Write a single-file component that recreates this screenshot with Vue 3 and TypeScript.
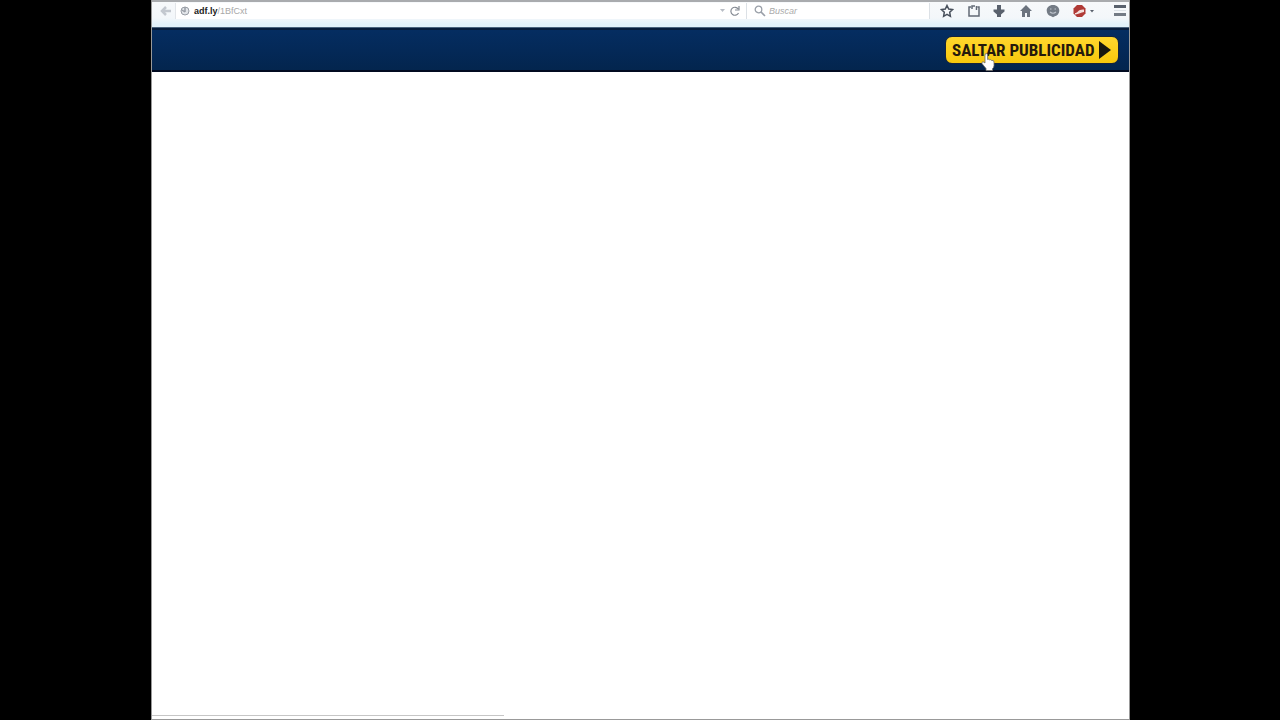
<script setup lang="ts">
import { ref } from 'vue'

const query = ref('')
</script>

<template>
  <div class="stage">
    <div class="browser">
      <header class="toolbar">
        <button class="icon back" aria-label="Atrás">
          <svg width="12" height="10" viewBox="0 0 12 10"><path d="M6 1 2 5l4 4M2 5h9" fill="none" stroke="#c3c8cf" stroke-width="2.500" /></svg>
        </button>
        <div class="address">
          <svg width="10" height="10" viewBox="0 0 10 10">
            <circle cx="5" cy="5" r="4" fill="#e2e5e9" stroke="#989da5" />
            <path d="M5 1v5M2 4l3 2" fill="none" stroke="#989da5" stroke-width="1.500" />
          </svg>
          <a class="url" href="#"><b>adf.ly</b><span>/1BfCxt</span></a>
          <svg class="drop" width="5" height="4" viewBox="0 0 5 4"><path d="M0 0h5L2.500 3z" fill="#b8bdc5" /></svg>
          <button class="icon" aria-label="Recargar">
            <svg width="10" height="10" viewBox="0 0 10 10"><path d="M8.200 3A4 4 0 1 0 8.500 7M9 0v4H5" fill="none" stroke="#848a93" stroke-width="1.200" /></svg>
          </button>
        </div>
        <label class="search">
          <svg width="12" height="12" viewBox="0 0 12 12"><circle cx="4.500" cy="4.500" r="3.300" fill="none" stroke="#999fa8" stroke-width="1.300" /><path d="m7 7 4 4" stroke="#999fa8" stroke-width="1.600" /></svg>
          <input v-model="query" type="text" placeholder="Buscar" aria-label="Buscar" />
        </label>
        <nav class="tools">
          <button class="icon" aria-label="Marcador">
            <svg width="14" height="14" viewBox="0 0 14 14"><path d="m7 1.500 1.700 3.600 3.800.5-2.800 2.700.7 4L7 10.400l-3.400 1.900.7-4L1.500 5.600l3.800-.5z" fill="#f8fafc" stroke="#48505c" stroke-width="1.500" /></svg>
          </button>
          <button class="icon list" aria-label="Lista de marcadores">
            <svg width="14" height="14" viewBox="0 0 14 14"><path d="M4 3H2v9h10V3h-1.500M5 5V2h3M9.500 2v4" fill="none" stroke="#616975" stroke-width="1.500" /></svg>
          </button>
          <button class="icon" aria-label="Descargas">
            <svg width="14" height="14" viewBox="0 0 14 14"><path d="M5 1h4v4.500h3.500v2L9 10.500V13H5v-2.500l-3.500-3v-2H5z" fill="#59616d" /></svg>
          </button>
          <button class="icon" aria-label="Inicio">
            <svg width="14" height="14" viewBox="0 0 14 14"><path d="m7 1 6 6h-2v6H8V9H6v4H3V7H1z" fill="#6b737e" /></svg>
          </button>
          <button class="icon" aria-label="Chat">
            <svg width="14" height="14" viewBox="0 0 14 14"><path d="M7 1c4 0 6.300 2.500 6.300 5.500S11 12 9.300 12.100L7 13.300l-2.300-1.200C2.500 11.800.7 9.500.7 6.500S3 1 7 1z" fill="#737b85" /><path d="M4 5h1.500M8.500 5H10M4 8q3 2.500 6 0" fill="none" stroke="#bfc5cd" stroke-width="1.200" /></svg>
          </button>
          <button class="icon" aria-label="Bloqueador">
            <svg width="22" height="14" viewBox="0 0 22 14"><path d="M4 1h5l3.500 3.500v5L9 13H4L.5 9.500v-5z" fill="#b03a36" /><path d="M2 9c3 0 3-4 9-3.500V8c-3 0-5 2.500-9 2.500z" fill="#f4dfdc" /><path d="M17 6h4l-2 2.500z" fill="#59616d" /></svg>
          </button>
          <button class="icon menu" aria-label="Menú">
            <svg width="12" height="14" viewBox="0 0 12 14"><path d="M0 2.500h12" stroke="#59616d" stroke-width="3" /><path d="M0 6.500h12" stroke="#dde3e8" stroke-width="1" /><path d="M0 10.500h12" stroke="#737b85" stroke-width="3" /></svg>
          </button>
        </nav>
      </header>

      <div class="banner">
        <button class="skip">
          <span>SALTAR PUBLICIDAD</span>
          <svg width="13" height="20" viewBox="0 0 13 20"><path d="M1 1v18L13 10z" fill="#17170f" /></svg>
          <svg class="pointer" width="14" height="18" viewBox="0 0 14 18"><path d="M4 10V2q0-1.500 1.300-1.500T6.600 2v4.500q1.200-.8 2 .3 1.200-.5 1.900.6Q13 7 13 9v3.500q0 2-1.500 3.200V17.500H5v-2L1 10.600Q.5 9 2 8.700z" fill="#fff" stroke="#6c6b68" stroke-width=".8" /></svg>
        </button>
      </div>
      <main class="page"></main>
      <div class="status"></div>
    </div>
  </div>
</template>

<style>
body {
  margin: 0;
  background: #000;
}
</style>

<style scoped>
* {
  box-sizing: border-box;
}
.stage {
  min-height: 100vh;
  padding: 0 150px 0 151px;
  display: flex;
  background: #000;
  font-family: "Liberation Sans", Arial, sans-serif;
}
.browser {
  flex: 1;
  min-width: 0;
  display: flex;
  flex-direction: column;
  background: #fff;
  border: solid #999;
  border-width: 0 1px 1px;
}
button {
  border: 0;
  padding: 0;
  background: none;
  font: inherit;
}
svg {
  display: block;
  flex: none;
}
.icon {
  display: flex;
  flex: none;
}
.toolbar {
  height: 28px;
  padding: 0 3px 7px 8px;
  display: flex;
  align-items: center;
  border-top: 2px solid #a9abae;
  border-bottom: 1px solid #49627c;
  background: linear-gradient(#f7f9fb 0, #f3f7fa 16px, #e2f1f9 22px);
}
.back {
  width: 15px;
}
.address {
  flex: 1;
  height: 16px;
  padding: 0 6px 0 4px;
  display: flex;
  align-items: center;
  background: #fff;
  border-left: 1px solid #e2e5e9;
}
.url {
  flex: 1;
  margin-left: 4px;
  color: #a8a8a8;
  font-size: 9px;
  line-height: 12px;
  text-decoration: none;
}
.url b {
  color: #222;
}
.drop {
  margin-right: 5px;
}
.search {
  width: 184px;
  height: 16px;
  padding-left: 7px;
  display: flex;
  align-items: center;
  gap: 3px;
  background: #fff;
  border: solid #dce1e6;
  border-width: 0 1px;
}
.search input {
  flex: 1;
  min-width: 0;
  border: 0;
  padding: 0;
  outline: 0;
  background: none;
  font: italic 9px/12px "Liberation Sans", Arial, sans-serif;
}
.search input::placeholder {
  color: #aaa;
  opacity: 1;
}
.tools {
  margin-left: 10px;
  display: flex;
  align-items: center;
  gap: 13px;
}
.list {
  width: 12px;
}
.menu {
  margin-left: 6px;
}
.banner {
  height: 44px;
  padding-right: 10px;
  display: flex;
  align-items: center;
  justify-content: flex-end;
  border-top: 2px solid #071c3b;
  border-bottom: 2px solid #010a20;
  background: linear-gradient(#052d61, #03254e);
}
.skip {
  position: relative;
  width: 174px;
  height: 28px;
  padding: 0 7px 0 6px;
  display: flex;
  align-items: center;
  justify-content: space-between;
  border: 1px solid #17243a;
  border-radius: 7px;
  background: linear-gradient(#ffd72e, #f8c80c);
  color: #24190c;
  font: bold 17px/20px "Liberation Sans Narrow", "Roboto Condensed", Roboto, sans-serif;
  white-space: nowrap;
}
.pointer {
  position: absolute;
  left: 35px;
  top: 16px;
}
.page {
  flex: 1;
}
.status {
  width: 36%;
  height: 4px;
  border-top: 1px solid #c6c6c6;
}
</style>
